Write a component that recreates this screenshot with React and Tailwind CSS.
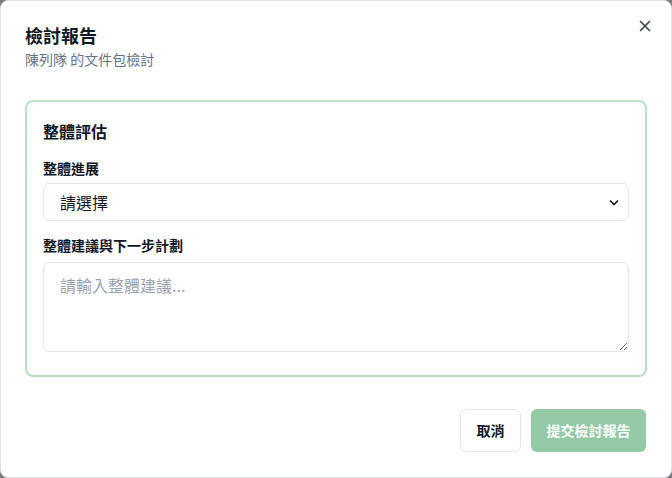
export default function App() {
  const font = { fontFamily: '"Noto Sans CJK TC", "Noto Sans", sans-serif' };
  return (
    <div className="w-[672px] h-[478px] bg-[#7a7a7a]" style={font}>
      <div className="relative w-[672px] h-[478px] bg-white border border-[#dfe3ea] rounded-lg px-[24px] pt-[20px]">
        <button className="absolute right-[19px] top-[18px] w-[14px] h-[14px] flex items-center justify-center text-[#374151]">
          <svg width="12" height="12" viewBox="0 0 12 12" fill="none" stroke="currentColor" strokeWidth="1.6" strokeLinecap="round">
            <path d="M1.5 1.5 L10.5 10.5 M10.5 1.5 L1.5 10.5" />
          </svg>
        </button>
        <h2 className="text-[18px] leading-[28px] font-bold text-[#111827]">檢討報告</h2>
        <p className="text-[14px] leading-[20px] text-[#64748b]">陳列隊 的文件包檢討</p>

        <div className="mt-[31px] border-2 border-[#b9e0c4] rounded-lg px-[16px] pt-[17px] pb-[23px]">
          <h3 className="text-[16px] leading-[24px] font-bold text-[#111827]">整體評估</h3>
          <label className="block mt-[15px] text-[14px] leading-[20px] font-semibold text-[#111827]">整體進展</label>
          <div className="mt-[5px] h-[38px] border border-[#e5e7eb] rounded-md flex items-center justify-between pl-[16px] pr-[9px] text-[16px] text-[#111827]">
            <span>請選擇</span>
            <svg width="10" height="7" viewBox="0 0 10 7" fill="none" stroke="#111827" strokeWidth="1.6">
              <path d="M1 1.5 L5 5.5 L9 1.5" />
            </svg>
          </div>
          <label className="block mt-[14px] text-[14px] leading-[20px] font-semibold text-[#111827]">整體建議與下一步計劃</label>
          <textarea
            className="mt-[7px] block w-full h-[90px] border border-[#e5e7eb] rounded-md px-[16px] py-[10px] text-[16px] leading-[24px] placeholder:text-[#9ca3af] outline-none"
            placeholder="請輸入整體建議..."
            style={font}
          />
        </div>

        <div className="mt-[32px] flex justify-end gap-[10px] pr-[1px]">
          <button className="h-[43px] w-[61px] border border-[#e2e8f0] rounded-md bg-white text-[14px] font-bold text-[#111827]">取消</button>
          <button className="h-[43px] w-[115px] rounded-md bg-[#93c9a5] text-[14px] font-bold text-white">提交檢討報告</button>
        </div>
      </div>
    </div>
  );
}
